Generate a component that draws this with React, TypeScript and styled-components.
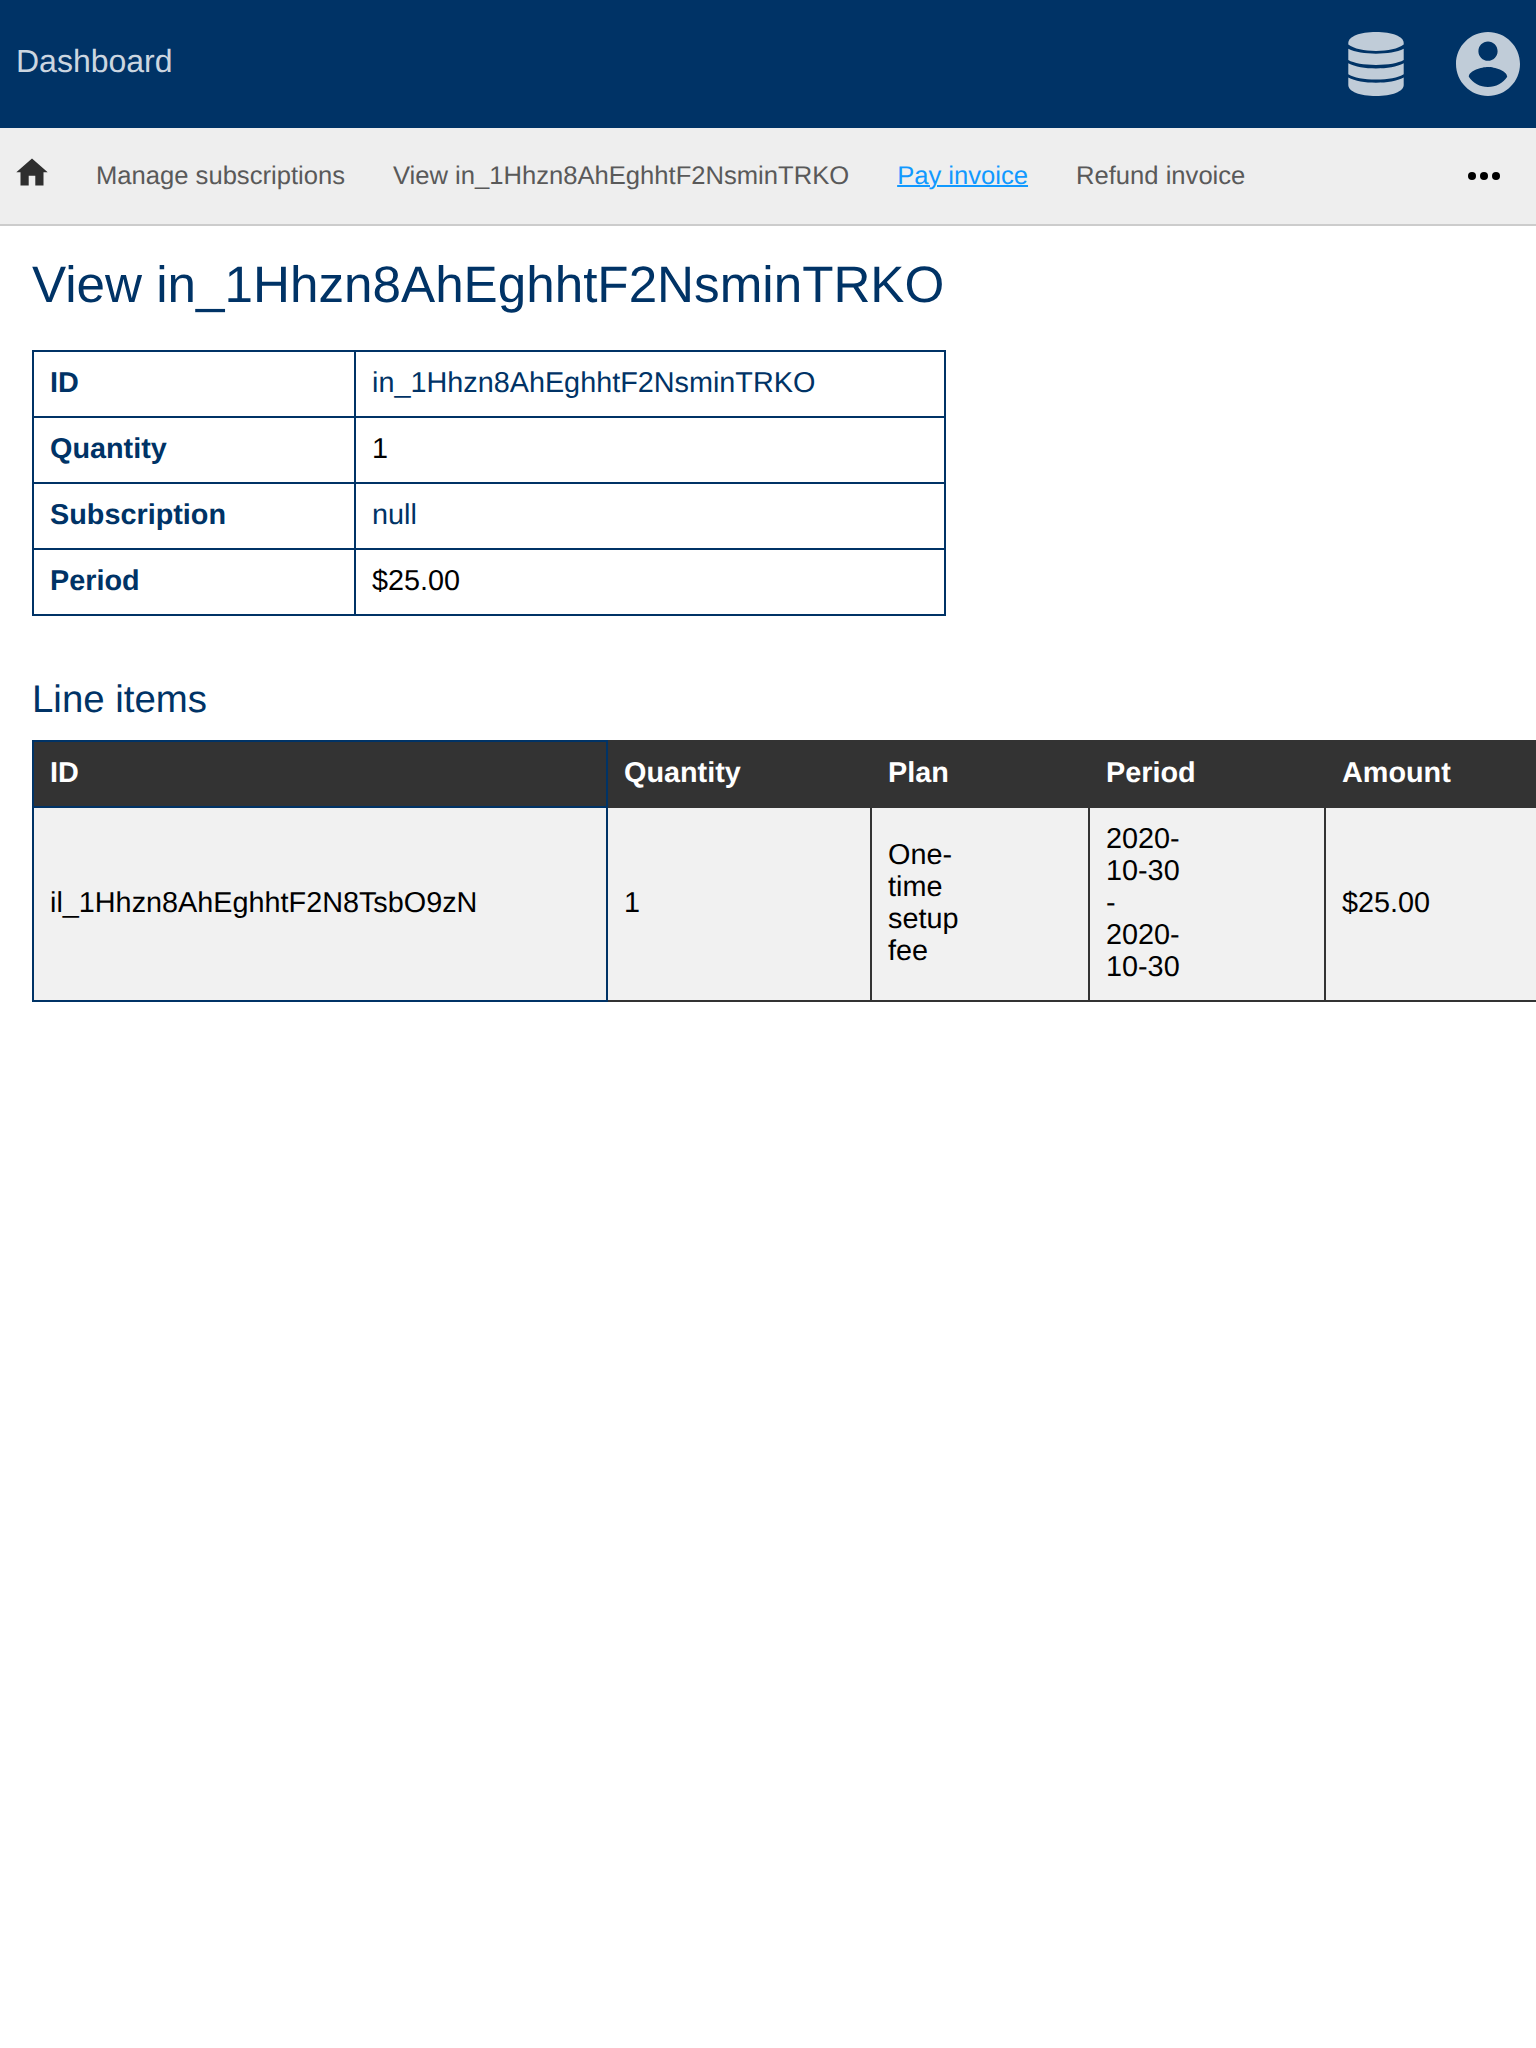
import React from "react";
import styled, { createGlobalStyle } from "styled-components";

const navy = "#003366";
const charcoal = "#333333";

const GlobalStyle = createGlobalStyle`
  html, body {
    margin: 0;
    padding: 0;
    background: #ffffff;
    overflow-x: hidden;
  }
  body {
    font-family: "Liberation Sans", Arial, Helvetica, sans-serif;
    font-size: 28.8px;
    color: #000000;
    text-rendering: geometricPrecision;
  }
`;

const Page = styled.div`
  width: 100%;
  min-height: 100vh;
  overflow: hidden;
`;

const Header = styled.header`
  display: flex;
  align-items: center;
  justify-content: space-between;
  box-sizing: border-box;
  height: 128px;
  padding: 0 16px;
  background: ${navy};
`;

const Brand = styled.a`
  font-size: 32px;
  line-height: 36px;
  padding-bottom: 6px;
  color: #ccd6e0;
`;

const HeaderIcons = styled.div`
  display: flex;
  align-items: center;
  gap: 52px;
  color: #c0ccd8;
`;

const Icon = styled.svg<{ $w: number; $h: number }>`
  display: block;
  flex: none;
  width: ${(p) => p.$w}px;
  height: ${(p) => p.$h}px;
  fill: currentColor;
`;

const NavBar = styled.nav`
  display: flex;
  align-items: center;
  gap: 48px;
  box-sizing: border-box;
  height: 98px;
  padding: 0 36px 0 16px;
  background: #eeeeee;
  border-bottom: 2px solid #cccccc;
`;

const HomeLink = styled.a`
  color: #2f2f2f;
  padding-bottom: 8px;
`;

const NavLink = styled.a<{ $active?: boolean }>`
  font-size: 25.6px;
  line-height: 30px;
  white-space: nowrap;
  color: ${(p) => (p.$active ? "#1199ff" : "#595959")};
  text-decoration: ${(p) => (p.$active ? "underline" : "none")};
  text-decoration-thickness: 2px;
`;

const MoreButton = styled.div`
  margin-left: auto;
  display: flex;
  gap: 4px;
`;

const Dot = styled.span`
  width: 8px;
  height: 8px;
  border-radius: 50%;
  background: #000000;
`;

const Content = styled.main`
  padding: 30px 32px 0;
`;

const Title = styled.h1`
  margin: 0 0 36px;
  font-size: 51.2px;
  line-height: 58px;
  font-weight: 400;
  color: ${navy};
`;

const Subtitle = styled.h2`
  margin: 62px 0 18px;
  font-size: 38.4px;
  line-height: 44px;
  font-weight: 400;
  color: ${navy};
`;

const Table = styled.table<{ $width: number }>`
  width: ${(p) => p.$width}px;
  table-layout: fixed;
  border-collapse: collapse;
  border-spacing: 0;
`;

const Col = styled.col<{ $width: number }>`
  width: ${(p) => p.$width}px;
`;

const Cell = styled.td<{ $linked?: boolean }>`
  padding: 15px 16px 17px;
  border: 2px solid ${navy};
  line-height: 32px;
  text-align: left;
  vertical-align: middle;
  color: ${(p) => (p.$linked ? navy : "#000000")};
`;

const RowHeading = styled(Cell)`
  font-weight: 700;
  color: ${navy};
`;

const ItemCell = styled(Cell)`
  border-color: ${charcoal};
  background: #f1f1f1;

  &:first-child {
    border-color: ${navy};
  }
`;

const ColumnHeading = styled(ItemCell)`
  font-weight: 700;
  color: #ffffff;
  background: ${charcoal};
`;

const Wrapped = styled.div<{ $width: number }>`
  width: ${(p) => p.$width}px;
`;

const details = [
  { label: "ID", value: "in_1Hhzn8AhEghhtF2NsminTRKO", linked: true },
  { label: "Quantity", value: "1", linked: false },
  { label: "Subscription", value: "null", linked: true },
  { label: "Period", value: "$25.00", linked: false },
];

const columns = [
  { label: "ID", width: 574 },
  { label: "Quantity", width: 264 },
  { label: "Plan", width: 218 },
  { label: "Period", width: 236 },
  { label: "Amount", width: 260 },
];

const columnTotal = columns.reduce((sum, c) => sum + c.width, 0);

export default function App() {
  return (
    <Page>
      <GlobalStyle />
      <Header>
        <Brand>Dashboard</Brand>
        <HeaderIcons>
          <Icon $w={56} $h={64} viewBox="0 0 56 64">
            <path d="M.3 11C.3 4.500 12 0 28 0s27.700 4.500 27.700 11v1.500C50 16.800 40 18.900 28 18.900S6 16.800 .3 12.500z" />
            <path d="M.3 16.800C7 20.100 17 21.700 28 21.700S49 20.100 55.700 16.800V28c-5.500 3.200-15.700 4.900-27.700 4.900S5.800 31.200 .3 28z" />
            <path d="M.3 31.200C7 34.700 17 36.400 28 36.400S49 34.700 55.700 31.200V42.300c-5.500 3.500-15.700 5.300-27.700 5.300S5.800 45.800 .3 42.300z" />
            <path d="M.3 45.600C7 49.100 17 50.800 28 50.800S49 49.100 55.700 45.600V53C55.700 59.500 44 64 28 64S.3 59.500 .3 53z" />
          </Icon>
          <Icon $w={64} $h={64} viewBox="2 2 20 20">
            <path d="M12 2C6.480 2 2 6.480 2 12s4.480 10 10 10 10-4.480 10-10S17.520 2 12 2zm0 3c1.660 0 3 1.340 3 3s-1.340 3-3 3-3-1.340-3-3 1.340-3 3-3zm0 14.200c-2.500 0-4.710-1.280-6-3.220.03-1.990 4-3.080 6-3.080 1.990 0 5.970 1.090 6 3.080-1.290 1.940-3.500 3.220-6 3.220z" />
          </Icon>
        </HeaderIcons>
      </Header>
      <NavBar>
        <HomeLink>
          <Icon $w={32} $h={28} viewBox="0 0 32 28">
            <path d="M16 .4L.3 14.200h4.200v13.200h8.200V17.800h6.600v9.600h8.200V14.200h4.200z" />
          </Icon>
        </HomeLink>
        <NavLink>Manage subscriptions</NavLink>
        <NavLink>View in_1Hhzn8AhEghhtF2NsminTRKO</NavLink>
        <NavLink $active>Pay invoice</NavLink>
        <NavLink>Refund invoice</NavLink>
        <MoreButton>
          <Dot />
          <Dot />
          <Dot />
        </MoreButton>
      </NavBar>
      <Content>
        <Title>View in_1Hhzn8AhEghhtF2NsminTRKO</Title>
        <Table $width={914}>
          <colgroup>
            <Col $width={322} />
            <Col $width={590} />
          </colgroup>
          <tbody>
            {details.map((d) => (
              <tr key={d.label}>
                <RowHeading as="th">{d.label}</RowHeading>
                <Cell $linked={d.linked}>{d.value}</Cell>
              </tr>
            ))}
          </tbody>
        </Table>
        <Subtitle>Line items</Subtitle>
        <Table $width={columnTotal + 2}>
          <colgroup>
            {columns.map((c) => (
              <Col key={c.label} $width={c.width} />
            ))}
          </colgroup>
          <thead>
            <tr>
              {columns.map((c) => (
                <ColumnHeading as="th" key={c.label}>
                  {c.label}
                </ColumnHeading>
              ))}
            </tr>
          </thead>
          <tbody>
            <tr>
              <ItemCell>il_1Hhzn8AhEghhtF2N8TsbO9zN</ItemCell>
              <ItemCell>1</ItemCell>
              <ItemCell>
                <Wrapped $width={80}>One-time setup fee</Wrapped>
              </ItemCell>
              <ItemCell>
                <Wrapped $width={76}>2020-10-30 - 2020-10-30</Wrapped>
              </ItemCell>
              <ItemCell>$25.00</ItemCell>
            </tr>
          </tbody>
        </Table>
      </Content>
    </Page>
  );
}
